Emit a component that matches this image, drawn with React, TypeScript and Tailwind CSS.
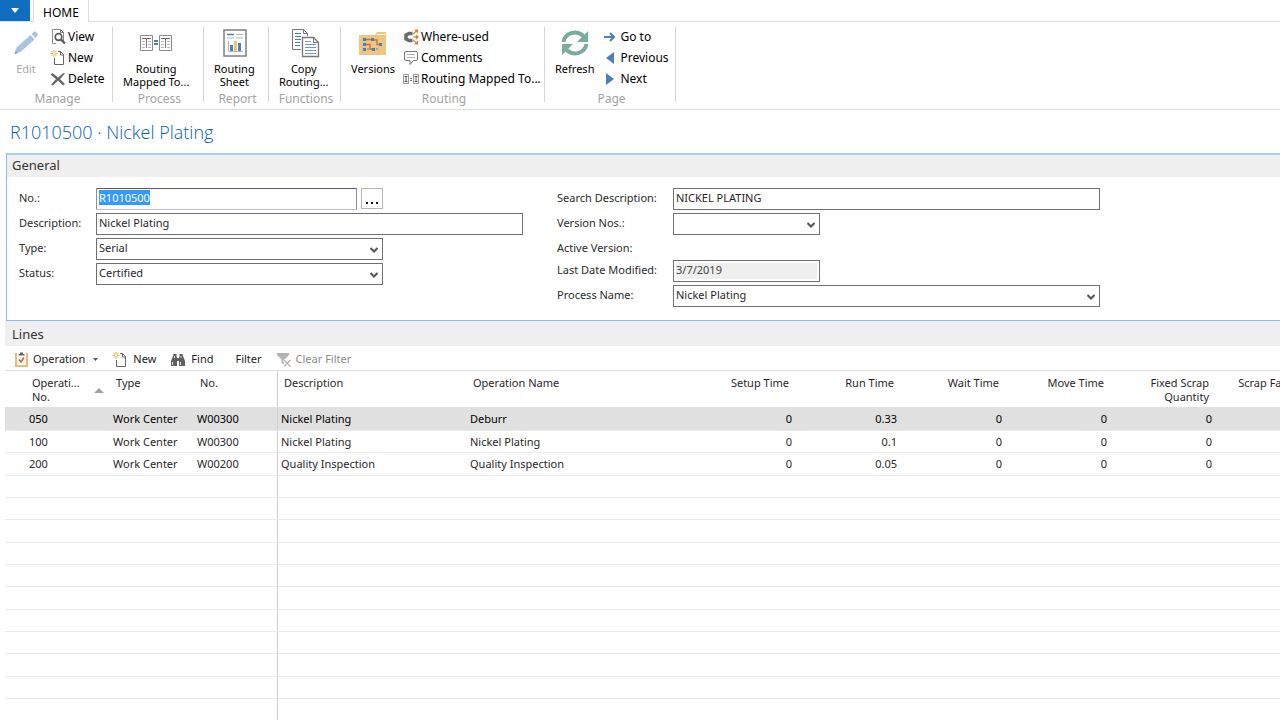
import { useEffect, useRef } from 'react';
import type { ReactNode } from 'react';

interface FieldProps {
  id: string;
  label: string;
  children?: ReactNode;
}

const inputClass =
  'h-[22px] border border-[#707070] bg-white px-[2px] text-[11px] text-[#2b1f2b] outline-none';

const lines = [
  { no: '050', type: 'Work Center', center: 'W00300', description: 'Nickel Plating', name: 'Deburr', run: '0.33' },
  { no: '100', type: 'Work Center', center: 'W00300', description: 'Nickel Plating', name: 'Nickel Plating', run: '0.1' },
  { no: '200', type: 'Work Center', center: 'W00200', description: 'Quality Inspection', name: 'Quality Inspection', run: '0.05' },
];

const emptyRows = Array.from({ length: 12 }, (_, i) => i);

/* Icons */

function PencilIcon() {
  return (
    <svg width="32" height="32" viewBox="0 0 32 32">
      <path d="M4.500 27l2-6.500L20.500 8l4 4.500-14 12.500z" fill="#a9c4e0" />
      <path d="M21.500 7l2.500-2.200q1-.6 2 .2l1.500 1.800q.8 1 0 2l-2.200 2.200z" fill="#a9c4e0" />
      <path d="M4.500 27l1-3.500 2.500 2.500z" fill="#7fa3cc" />
    </svg>
  );
}

function ViewIcon() {
  return (
    <svg width="16" height="16" viewBox="0 0 16 16" fill="none">
      <path d="M6 14.500H2.500V.500h8l3 3V12" stroke="#8a8a8a" />
      <path d="M10.500.500v3h3" stroke="#777" />
      <circle cx="8.500" cy="8" r="3.300" stroke="#5c5c5c" strokeWidth="1.700" />
      <path d="M11 10.500l4 4" stroke="#5c5c5c" strokeWidth="2.400" />
    </svg>
  );
}

function NewIcon() {
  return (
    <svg width="16" height="16" viewBox="0 0 16 16" fill="none">
      <path d="M8 1.500h2.500l3 3v10h-9V8" stroke="#666" />
      <path d="M10.500 1.500v3.500h3" stroke="#666" />
      <path d="M4 0v7M.500 3.500h7M1.500 1l5 5M6.500 1l-5 5" stroke="#efb865" />
      <circle cx="4" cy="3.500" r="1" fill="#fff" />
    </svg>
  );
}

function DeleteIcon() {
  return (
    <svg width="16" height="16" viewBox="0 0 16 16" fill="#666">
      <path d="M.500 3.500L2.500 2 8 6.500 13.500 2l1.500.500L10 8l5 5-2 1.500L8 9.500 3 14.500 1 14l5-6z" />
    </svg>
  );
}

function MappedIcon() {
  return (
    <svg width="32" height="32" viewBox="0 0 32 32" fill="none">
      <path d="M.500 8.500h12v15H.500zM19.500 8.500h12v15h-12z" stroke="#8a8a8a" />
      <path d="M2 11.500h9M21 11.500h9" stroke="#666" />
      <path d="M2 14.500h3M2 17.500h3M2 20.500h3M8 14.500h3M8 17.500h3M8 20.500h3M21 14.500h3M21 17.500h3M21 20.500h3M27 14.500h3M27 17.500h3M27 20.500h3" stroke="#b5b5b5" />
      <path d="M6.500 11v10M25.500 11v10" stroke="#777" />
      <path d="M14 14h4M14 17h4" stroke="#4a80b8" strokeWidth="2" />
    </svg>
  );
}

function SmallMappedIcon() {
  return (
    <svg width="16" height="16" viewBox="0 0 16 16" fill="none">
      <path d="M.500 3.500h5v9h-5zM10.500 3.500h5v9h-5z" stroke="#999" />
      <path d="M1.500 5.500h3M3 5.500v5M1.500 10.500h3M11.500 5.500h3M13 5.500v5M11.500 10.500h3" stroke="#555" />
      <path d="M7 7.500h2M7 9.500h2" stroke="#4a80b8" />
    </svg>
  );
}

function SheetIcon() {
  return (
    <svg width="32" height="32" viewBox="0 0 32 32" fill="none">
      <path d="M6 3h22v26H6z" stroke="#808080" strokeWidth="1.500" />
      <path d="M9 7.500h7" stroke="#4a80b8" strokeWidth="1.500" />
      <path d="M18 7.500h7M9 11h7M18 11h7" stroke="#b5b5b5" />
      <path d="M10.500 14v10.500H25" stroke="#b5b5b5" />
      <path d="M12 18h3v6h-3zM20 16h3v8h-3z" fill="#4a80b8" />
      <path d="M16 14h3v10h-3z" fill="#eec378" />
    </svg>
  );
}

function CopyIcon() {
  return (
    <svg width="32" height="32" viewBox="0 0 32 32" fill="none">
      <path d="M13 22.500H4.500v-20h11l4 4V9" stroke="#777" />
      <path d="M15.500 2.500v4h4" stroke="#777" />
      <path d="M7 6.500h6M7 9.500h6M7 12.500h6M7 15.500h5M7 18.500h5" stroke="#4a80b8" />
      <path d="M14.500 10.500h11l5 5v14h-16z" fill="#fff" stroke="#777" strokeWidth="1.300" />
      <path d="M25.500 10.500v5h5" stroke="#777" />
      <path d="M17 14.500h6M17 17.500h11M17 20.500h11M17 23.500h11M17 26.500h11" stroke="#6d9ac8" />
    </svg>
  );
}

function VersionsIcon() {
  return (
    <svg width="32" height="32" viewBox="0 0 32 32">
      <path d="M2 8h16l2-3h8q1 0 1 1v22H2z" fill="#eec682" />
      <path d="M20 7.500h8" stroke="#fff" />
      <path d="M9 12.500h6M17 13h3v4.500h2M9 17.500h4V22h2" stroke="#d9673c" fill="none" strokeWidth="1.300" />
      <path d="M6 11h3v3H6zM6 16h3v3H6zM6 21h3v3H6zM14 11h3v3h-3zM22 16h3v3h-3zM15 21h3v3h-3z" fill="#4a80b8" />
      <path d="M10 21h2v2h-2zM19 21h2v2h-2z" fill="#8faac5" />
    </svg>
  );
}

function WhereUsedIcon() {
  return (
    <svg width="16" height="16" viewBox="0 0 16 16" fill="none">
      <path d="M9.500 4.500H6L3 6v4l3 1.500h3.500" stroke="#6a6a6a" strokeWidth="3.500" />
      <path d="M10 5l4-3.500M10.500 8H14M10 11l4 3.500" stroke="#e58a3e" strokeWidth="1.300" />
      <path d="M11 .500h4v4zM13 5.500L16 8l-3 2.500zM11 15.500h4v-4z" fill="#e07b2e" />
    </svg>
  );
}

function CommentIcon() {
  return (
    <svg width="16" height="16" viewBox="0 0 16 16" fill="none">
      <path d="M3 1.500h10q1.500 0 1.500 1.500v6q0 1.500-1.500 1.500h-2.500L7 14.500v-4H3Q1.500 10.500 1.500 9V3Q1.500 1.500 3 1.500z" stroke="#777" />
      <path d="M4 4.500h8M4 7.500h8" stroke="#b0b0b0" />
    </svg>
  );
}

function RefreshIcon() {
  return (
    <svg width="32" height="32" viewBox="0 0 32 32" fill="none">
      <path d="M4.500 15C6 6 17 2.500 24.500 9" stroke="#7bab99" strokeWidth="4" />
      <path d="M29 4v11H18z" fill="#7bab99" />
      <path d="M27.500 17C26 26 15 29.500 7.500 23" stroke="#7bab99" strokeWidth="4" />
      <path d="M3 28V17h11z" fill="#7bab99" />
    </svg>
  );
}

function GoToIcon() {
  return (
    <svg width="16" height="16" viewBox="0 0 16 16" fill="none" stroke="#4a80b8" strokeWidth="2">
      <path d="M2 8h10M8 4l4 4-4 4" />
    </svg>
  );
}

function PreviousIcon() {
  return (
    <svg width="16" height="16" viewBox="0 0 16 16">
      <path d="M12 2v12L4 8z" fill="#4a80b8" />
    </svg>
  );
}

function NextIcon() {
  return (
    <svg width="16" height="16" viewBox="0 0 16 16">
      <path d="M4 2v12l8-6z" fill="#4a80b8" />
    </svg>
  );
}

function OperationIcon() {
  return (
    <svg width="16" height="16" viewBox="0 0 16 16" fill="none">
      <path d="M4 2H3v12h11V2h-1" stroke="#eabb72" strokeWidth="2" />
      <path d="M5.500 3.500V2H7V.500h3V2h1.500v1.500z" fill="#666" />
      <path d="M6 7.500L8 10l3-4.500" stroke="#dd5b3a" strokeWidth="1.600" />
    </svg>
  );
}

function FindIcon() {
  return (
    <svg width="16" height="16" viewBox="0 0 16 16" fill="#606060">
      <path d="M3.500 2h3v2L7 6v8H1V9l2-5zM12.500 2h-3v2L9 6v8h6V9l-2-5z" />
      <path d="M7 6h2v3H7z" />
      <path d="M2.500 10v3M10.500 10v3M4.500 4v2M11 4v2" stroke="#fff" strokeWidth=".8" />
    </svg>
  );
}

function ClearFilterIcon() {
  return (
    <svg width="16" height="16" viewBox="0 0 16 16">
      <path d="M1 1h12v2L8.500 7.500V13l-3-2V7.500L1 3z" fill="#b3b3b3" />
      <path d="M8 8l6.500 6.500M14.500 8L8 14.500" stroke="#fff" strokeWidth="3.500" />
      <path d="M8 8l6.500 6.500M14.500 8L8 14.500" stroke="#b3b3b3" strokeWidth="1.400" />
    </svg>
  );
}

/* Ribbon */

function RibbonGroup({ label, width, children }: { label: string; width: string; children: ReactNode }) {
  return (
    <section className={`${width} flex shrink-0 flex-col border-r border-[#d5d5d5]`}>
      <div className="flex flex-1 items-start pl-[10px]">{children}</div>
      <h2 className="pl-[3px] text-center text-[12px] leading-[6px] text-[#a3a3a3]">{label}</h2>
    </section>
  );
}

function LargeButton({ icon, disabled, children }: { icon: ReactNode; disabled?: boolean; children: ReactNode }) {
  return (
    <button
      type="button"
      disabled={disabled}
      className="flex flex-col items-center text-[11px] leading-[13px] whitespace-nowrap disabled:text-[#a8a8a8]"
    >
      <span className="mb-[3px]">{icon}</span>
      {children}
    </button>
  );
}

function SmallButton({ icon, children }: { icon: ReactNode; children: ReactNode }) {
  return (
    <button type="button" className="flex h-[21px] items-center gap-[2px] text-[12px] whitespace-nowrap">
      {icon}
      {children}
    </button>
  );
}

function SmallButtons({ children }: { children: ReactNode }) {
  return <div className="-mt-px ml-[8px]">{children}</div>;
}

function Ribbon() {
  return (
    <header>
      <nav className="flex h-[22px] border-b border-[#dedede]">
        <button type="button" aria-label="Application menu" className="flex h-[21px] w-[30px] items-center justify-center bg-[#106ebe]">
          <svg width="8" height="5" viewBox="0 0 8 5">
            <path d="M0 0h8L4 5z" fill="#fff" />
          </svg>
        </button>
        <button type="button" className="ml-[3px] h-[22px] w-[56px] border-x border-[#dedede] bg-white pt-[3px] text-[12px]">
          HOME
        </button>
      </nav>
      <div className="flex h-[88px] overflow-hidden border-b border-[#dedede] pt-[5px] pb-[7px]">
        <RibbonGroup label="Manage" width="w-[113px]">
          <LargeButton icon={<PencilIcon />} disabled>Edit</LargeButton>
          <SmallButtons>
            <SmallButton icon={<ViewIcon />}>View</SmallButton>
            <SmallButton icon={<NewIcon />}>New</SmallButton>
            <SmallButton icon={<DeleteIcon />}>Delete</SmallButton>
          </SmallButtons>
        </RibbonGroup>
        <RibbonGroup label="Process" width="w-[91px]">
          <LargeButton icon={<MappedIcon />}>
            Routing
            <br />
            Mapped To...
          </LargeButton>
        </RibbonGroup>
        <RibbonGroup label="Report" width="w-[65px]">
          <LargeButton icon={<SheetIcon />}>
            Routing
            <br />
            Sheet
          </LargeButton>
        </RibbonGroup>
        <RibbonGroup label="Functions" width="w-[72px]">
          <LargeButton icon={<CopyIcon />}>
            Copy
            <br />
            Routing...
          </LargeButton>
        </RibbonGroup>
        <RibbonGroup label="Routing" width="w-[204px]">
          <LargeButton icon={<VersionsIcon />}>Versions</LargeButton>
          <SmallButtons>
            <SmallButton icon={<WhereUsedIcon />}>Where-used</SmallButton>
            <SmallButton icon={<CommentIcon />}>Comments</SmallButton>
            <SmallButton icon={<SmallMappedIcon />}>Routing Mapped To...</SmallButton>
          </SmallButtons>
        </RibbonGroup>
        <RibbonGroup label="Page" width="w-[131px]">
          <LargeButton icon={<RefreshIcon />}>Refresh</LargeButton>
          <SmallButtons>
            <SmallButton icon={<GoToIcon />}>Go to</SmallButton>
            <SmallButton icon={<PreviousIcon />}>Previous</SmallButton>
            <SmallButton icon={<NextIcon />}>Next</SmallButton>
          </SmallButtons>
        </RibbonGroup>
      </div>
    </header>
  );
}

/* General tab */

function Field({ id, label, children }: FieldProps) {
  return (
    <div className="flex h-[22px] items-center">
      <label htmlFor={id} className="flex-1 pb-[2px] text-[11px] whitespace-nowrap">
        {label}
      </label>
      {children}
    </div>
  );
}

function SelectBox({ id, width, value }: { id: string; width: string; value: string }) {
  return (
    <div className={`relative ${width}`}>
      <select id={id} defaultValue={value} className={`${inputClass} block w-full appearance-none pb-[2px]`}>
        <option>{value}</option>
      </select>
      <svg width="8" height="6" viewBox="0 0 8 6" className="pointer-events-none absolute top-[9px] right-[5px]">
        <path d="M.500 1L4 4.500 7.500 1" stroke="#555" strokeWidth="2" fill="none" />
      </svg>
    </div>
  );
}

function GeneralTab() {
  const noRef = useRef<HTMLInputElement>(null);

  useEffect(() => {
    noRef.current?.focus();
    noRef.current?.select();
  }, []);

  return (
    <section className="ml-[6px] border-t-2 border-b border-l border-t-[#aecbfa] border-b-[#8fb9f7] border-l-[#8fb9f7]">
      <h2 className="h-[22px] bg-[#efefef] pl-[5px] text-[13px] leading-[21px] text-[#333]">General</h2>
      <div className="flex gap-[34px] pt-[11px] pb-[13px] pl-[12px] text-[#2b2b2b]">
        <div className="flex w-[504px] flex-col gap-[3px]">
          <Field id="no" label="No.:">
            <div className="flex w-[427px] gap-[4px]">
              <input
                id="no"
                ref={noRef}
                defaultValue="R1010500"
                className="h-[22px] w-[261px] rounded-[1px] border border-t-[#5b5595] border-r-[#8c88b8] border-b-[#c0bedb] border-l-[#8c88b8] px-[2px] pb-[4px] text-[11px] outline-none selection:bg-[#3399ff] selection:text-white"
              />
              <button type="button" aria-label="Assist edit" className="flex h-[21px] w-[22px] items-end justify-center border border-[#b4b4bc] bg-white pb-[4px]">
                <svg width="12" height="2" viewBox="0 0 12 2">
                  <path d="M0 0h2v2H0zM5 0h2v2H5zM10 0h2v2h-2z" fill="#111" />
                </svg>
              </button>
            </div>
          </Field>
          <Field id="description" label="Description:">
            <input id="description" defaultValue="Nickel Plating" className={`${inputClass} w-[427px] pb-[4px]`} />
          </Field>
          <Field id="type" label="Type:">
            <div className="w-[427px]">
              <SelectBox id="type" width="w-[287px]" value="Serial" />
            </div>
          </Field>
          <Field id="status" label="Status:">
            <div className="w-[427px]">
              <SelectBox id="status" width="w-[287px]" value="Certified" />
            </div>
          </Field>
        </div>
        <div className="flex w-[543px] flex-col gap-[3px]">
          <Field id="search" label="Search Description:">
            <input id="search" defaultValue="NICKEL PLATING" className={`${inputClass} w-[427px] pb-[4px]`} />
          </Field>
          <Field id="version" label="Version Nos.:">
            <div className="w-[427px]">
              <SelectBox id="version" width="w-[147px]" value="" />
            </div>
          </Field>
          <div className="h-[19px] pt-[2px] text-[11px] leading-[16px]">Active Version:</div>
          <Field id="modified" label="Last Date Modified:">
            <div className="w-[427px]">
              <input
                id="modified"
                readOnly
                defaultValue="3/7/2019"
                className="block h-[22px] w-[147px] border border-[#707070] bg-[#efefef] px-[2px] pb-[4px] text-[11px] text-[#444] shadow-[inset_0_0_0_2px_#fff] outline-none"
              />
            </div>
          </Field>
          <Field id="process" label="Process Name:">
            <SelectBox id="process" width="w-[427px]" value="Nickel Plating" />
          </Field>
        </div>
      </div>
    </section>
  );
}

/* Lines tab */

function LinesToolbar() {
  return (
    <div className="flex h-[25px] items-center pt-[2px] pl-[8px] text-[11px] text-[#222]">
      <button type="button" className="flex items-center gap-[4px]">
        <OperationIcon />
        Operation
        <svg width="5" height="3" viewBox="0 0 5 3" className="ml-[4px]">
          <path d="M0 0h5L2.500 3z" fill="#555" />
        </svg>
      </button>
      <button type="button" className="ml-[14px] flex items-center gap-[5px]">
        <NewIcon />
        New
      </button>
      <button type="button" className="ml-[14px] flex items-center gap-[5px]">
        <FindIcon />
        Find
      </button>
      <button type="button" className="ml-[22px]">Filter</button>
      <button type="button" disabled className="ml-[14px] flex items-center gap-[4px] text-[#8b8b8b]">
        <ClearFilterIcon />
        Clear Filter
      </button>
    </div>
  );
}

function LinesTable() {
  const head = 'px-[6px] pt-[5px] align-top font-normal';
  const cell = 'border-t border-[#ebebeb] px-[3px] group-first:border-[#e0e0e0]';
  const rowClass = 'group h-[22px] first:h-[23px] first:bg-[#e0e0e0] first:text-black nth-[3n]:h-[23px]';

  return (
    <table className="w-full min-w-[1315px] table-fixed border-separate border-spacing-0 text-[11px] leading-[14px] text-[#2b1f2b]">
      <colgroup>
        <col className="w-[21px]" />
        <col className="w-[84px]" />
        <col className="w-[84px]" />
        <col className="w-[84px]" />
        <col className="w-[189px]" />
        <col />
        <col className="w-[105px]" />
        <col className="w-[105px]" />
        <col className="w-[105px]" />
        <col className="w-[105px]" />
        <col className="w-[105px]" />
        <col className="w-[105px]" />
      </colgroup>
      <thead>
        <tr className="h-[36px] text-left">
          <td />
          <th className={head}>
            <div className="flex items-center justify-between">
              <span>
                Operati...
                <br />
                No.
              </span>
              <svg width="10" height="5" viewBox="0 0 10 5">
                <path d="M0 5h10L5 0z" fill="#a0a0a0" />
              </svg>
            </div>
          </th>
          <th className={head}>Type</th>
          <th className={`${head} border-r border-[#cfcfcf]`}>No.</th>
          <th className={head}>Description</th>
          <th className={head}>Operation Name</th>
          <th className={`${head} text-right`}>Setup Time</th>
          <th className={`${head} text-right`}>Run Time</th>
          <th className={`${head} text-right`}>Wait Time</th>
          <th className={`${head} text-right`}>Move Time</th>
          <th className={`${head} text-right`}>Fixed Scrap Quantity</th>
          <th className={`${head} text-right whitespace-nowrap`}>Scrap Factor %</th>
        </tr>
      </thead>
      <tbody>
        {lines.map((line) => (
          <tr key={line.no} className={rowClass}>
            <td className={cell} />
            <td className={cell}>{line.no}</td>
            <td className={cell}>{line.type}</td>
            <td className={`${cell} border-r border-r-[#cfcfcf] group-first:border-r-[#cfcfcf]`}>{line.center}</td>
            <td className={cell}>{line.description}</td>
            <td className={cell}>{line.name}</td>
            <td className={`${cell} text-right`}>0</td>
            <td className={`${cell} text-right`}>{line.run}</td>
            <td className={`${cell} text-right`}>0</td>
            <td className={`${cell} text-right`}>0</td>
            <td className={`${cell} text-right`}>0</td>
            <td className={`${cell} text-right`}>0</td>
          </tr>
        ))}
        {emptyRows.map((row) => (
          <tr key={row} className={rowClass}>
            <td className={cell} colSpan={3} />
            <td className={`${cell} border-r border-r-[#cfcfcf]`} />
            <td className={cell} colSpan={8} />
          </tr>
        ))}
      </tbody>
    </table>
  );
}

export default function App() {
  return (
    <div className="h-screen overflow-hidden bg-white font-['Noto_Sans','Open_Sans',sans-serif] text-black">
      <Ribbon />
      <h1 className="h-[43px] pt-[10px] pl-[10px] font-['Open_Sans','Noto_Sans',sans-serif] text-[18px] leading-[24px] font-light text-[#0562b8]">
        R1010500 · Nickel Plating
      </h1>
      <GeneralTab />
      <section className="ml-[5px]">
        <h2 className="h-[25px] bg-[#efefef] pl-[7px] text-[13px] leading-[26px] text-[#333]">Lines</h2>
        <LinesToolbar />
        <div className="-mt-px overflow-hidden border-t border-[#dedede]">
          <LinesTable />
        </div>
      </section>
    </div>
  );
}
